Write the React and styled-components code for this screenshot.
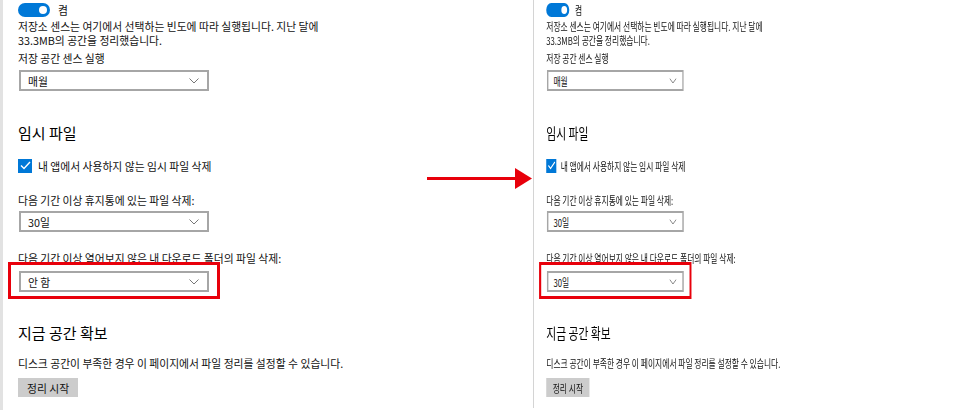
import React from 'react';
import styled, { createGlobalStyle } from 'styled-components';

const GlobalStyle = createGlobalStyle`
  html, body {
    margin: 0;
    padding: 0;
    background: #fff;
  }
  body {
    font-family: "Noto Sans CJK KR", "Noto Sans", sans-serif;
    color: #000;
  }
`;

const Page = styled.div`
  display: flex;
  width: 962px;
  height: 410px;
  overflow: hidden;
  background: #fff;
`;

const LeftPanel = styled.div`
  width: 397px;
  height: 410px;
  border-left: 3px solid #e2e2e2;
`;

const ArrowCol = styled.div`
  width: 133px;
  padding-top: 168px;
  padding-left: 27px;
  box-sizing: border-box;
`;

const RightPanel = styled.div`
  flex: 1;
  height: 408px;
  border-left: 1px solid #d4d4d4;
  overflow: hidden;
`;

const Squeezed = styled.div`
  width: 600px;
  transform: scaleX(0.72);
  transform-origin: left top;
`;

const Content = styled.div`
  display: flex;
  flex-direction: column;
  align-items: flex-start;
  padding: 3px 0 0 ${(p) => p.$pad}px;
`;

const ToggleRow = styled.div`
  display: flex;
  align-items: center;
  gap: 8px;
  height: 14px;
`;

const Toggle = styled.span`
  position: relative;
  width: 32px;
  height: 14px;
  border-radius: 7px;
  background: #0078d7;

  &::after {
    content: '';
    position: absolute;
    right: 3px;
    top: 3px;
    width: 8px;
    height: 8px;
    border-radius: 50%;
    background: #fff;
  }
`;

const Text = styled.div`
  font-size: 10.8px;
  line-height: 14px;
  margin-top: ${(p) => p.$mt || 0}px;
  white-space: nowrap;
  color: #111;
`;

const Heading = styled.div`
  font-size: 15px;
  line-height: 20px;
  margin-top: ${(p) => p.$mt}px;
  white-space: nowrap;
`;

const CheckRow = styled.div`
  display: flex;
  align-items: center;
  gap: 6px;
  height: 15px;
  margin-top: 15px;
  font-size: 10.8px;
  color: #111;
`;

const CheckBox = styled.span`
  display: flex;
  align-items: center;
  justify-content: center;
  width: 14px;
  height: 14px;
  background: #0078d7;
`;

const SelectWrap = styled.div`
  position: relative;
  margin-top: ${(p) => p.$mt}px;
  margin-left: 1px;
`;

const Select = styled.div`
  display: flex;
  align-items: center;
  justify-content: space-between;
  box-sizing: border-box;
  width: 190px;
  height: 21px;
  padding: 0 8px 0 7px;
  border: 2px solid #a6a6a6;
  background: #fff;
  font-size: 10.8px;
  color: #111;
`;

const Highlight = styled.div`
  position: absolute;
  left: -11px;
  right: -11px;
  top: -9px;
  bottom: -7px;
  border: 3px solid #e8000b;
  pointer-events: none;
`;

const Button = styled.div`
  margin-top: 8px;
  height: 19px;
  padding: 0 9px;
  display: flex;
  align-items: center;
  background: #cccccc;
  font-size: 10.8px;
  color: #111;
`;

const Chevron = () => (
  <svg width="10" height="6" viewBox="0 0 10 6">
    <polyline points="0.5,0.5 5,5 9.5,0.5" fill="none" stroke="#777" strokeWidth="1" />
  </svg>
);

const Check = () => (
  <svg width="11" height="9" viewBox="0 0 11 9">
    <polyline points="1,4.5 4,7.5 10,1" fill="none" stroke="#fff" strokeWidth="1.4" />
  </svg>
);

const Arrow = () => (
  <svg width="105" height="21" viewBox="0 0 105 21">
    <rect x="0" y="9" width="90" height="3" fill="#e8000b" />
    <polygon points="88,0 105,10.5 88,21" fill="#e8000b" />
  </svg>
);

const StoragePanel = ({ pad, downloads }) => (
  <Content $pad={pad}>
    <ToggleRow>
      <Toggle />
      <Text>켬</Text>
    </ToggleRow>
    <Text $mt={2}>
      저장소 센스는 여기에서 선택하는 빈도에 따라 실행됩니다. 지난 달에
      <br />
      33.3MB의 공간을 정리했습니다.
    </Text>
    <Text $mt={4}>저장 공간 센스 실행</Text>
    <SelectWrap $mt={5}>
      <Select>
        매월
        <Chevron />
      </Select>
    </SelectWrap>

    <Heading $mt={32}>임시 파일</Heading>
    <CheckRow>
      <CheckBox>
        <Check />
      </CheckBox>
      내 앱에서 사용하지 않는 임시 파일 삭제
    </CheckRow>
    <Text $mt={20}>다음 기간 이상 휴지통에 있는 파일 삭제:</Text>
    <SelectWrap $mt={4}>
      <Select>
        30일
        <Chevron />
      </Select>
    </SelectWrap>
    <Text $mt={19}>다음 기간 이상 열어보지 않은 내 다운로드 폴더의 파일 삭제:</Text>
    <SelectWrap $mt={6}>
      <Select>
        {downloads}
        <Chevron />
      </Select>
      <Highlight />
    </SelectWrap>

    <Heading $mt={31}>지금 공간 확보</Heading>
    <Text $mt={13}>디스크 공간이 부족한 경우 이 페이지에서 파일 정리를 설정할 수 있습니다.</Text>
    <Button>정리 시작</Button>
  </Content>
);

const App = () => (
  <>
    <GlobalStyle />
    <Page>
      <LeftPanel>
        <StoragePanel pad={15} downloads="안 함" />
      </LeftPanel>
      <ArrowCol>
        <Arrow />
      </ArrowCol>
      <RightPanel>
        <Squeezed>
          <StoragePanel pad={17} downloads="30일" />
        </Squeezed>
      </RightPanel>
    </Page>
  </>
);

export default App;
